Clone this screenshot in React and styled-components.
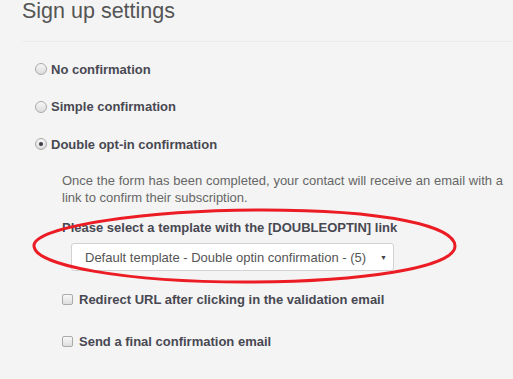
import React from 'react';
import styled, { createGlobalStyle } from 'styled-components';

const GlobalStyle = createGlobalStyle`
  html, body {
    margin: 0;
    padding: 0;
    background: #f4f4f4;
  }
  body {
    font-family: "Liberation Sans", Arial, sans-serif;
    color: #4a4a4a;
  }
`;

const Page = styled.div`
  position: relative;
  padding-left: 22px;
  min-height: 379px;
  box-sizing: border-box;
  overflow: hidden;
`;

const Title = styled.h1`
  margin: 0;
  font-size: 21.5px;
  line-height: 23px;
  font-weight: normal;
  color: #555;
`;

const Divider = styled.div`
  margin-top: 18px;
  height: 1px;
  background: #ececec;
`;

const Options = styled.div`
  padding-left: 13px;
  margin-top: 19px;
  display: flex;
  flex-direction: column;
`;

const OptionRow = styled.label`
  display: flex;
  align-items: center;
  gap: 4px;
  height: 16px;
  margin-top: ${p => p.$first ? '0' : '21.5px'};
  font-size: 13px;
  font-weight: bold;
  color: #484852;
`;

const Radio = styled.span`
  width: 10px;
  height: 10px;
  border-radius: 50%;
  border: 1px solid #aaa;
  background: linear-gradient(#f6f6f6, #dcdcdc);
  display: flex;
  align-items: center;
  justify-content: center;
  flex-shrink: 0;

  &::after {
    content: '';
    display: ${p => p.$checked ? 'block' : 'none'};
    width: 4px;
    height: 4px;
    border-radius: 50%;
    background: #3b3b45;
  }
`;

const Details = styled.div`
  padding-left: 27px;
  padding-right: 10px;
`;

const Description = styled.p`
  margin: 19.5px 0 0;
  font-size: 13px;
  line-height: 17px;
  color: #666;
  text-align: justify;
`;

const FieldLabel = styled.div`
  margin-top: 13px;
  font-size: 13px;
  line-height: 17px;
  font-weight: bold;
  color: #484852;
`;

const Select = styled.div`
  margin: 7.5px 0 0 9px;
  width: 323px;
  height: 28px;
  box-sizing: border-box;
  background: #fff;
  border: 1px solid #d2d2d2;
  border-radius: 3px;
  display: flex;
  align-items: center;
  justify-content: space-between;
  padding: 0 6px 0 13px;
  font-size: 13px;
  color: #555;
`;

const Caret = styled.span`
  font-size: 7px;
  color: #444;
`;

const CheckRow = styled.label`
  display: flex;
  align-items: center;
  gap: 6px;
  height: 16px;
  margin-top: ${p => p.$gap};
  font-size: 13px;
  font-weight: bold;
  color: #484852;
`;

const Checkbox = styled.span`
  width: 9px;
  height: 9px;
  border: 1px solid #aaa;
  border-radius: 2px;
  background: linear-gradient(#f8f8f8, #dedede);
  flex-shrink: 0;
`;

const Annotation = styled.svg`
  position: absolute;
  left: 0;
  top: 0;
  pointer-events: none;
`;

export default function App() {
  return (
    <>
      <GlobalStyle />
      <Page>
        <Title>Sign up settings</Title>
        <Divider />
        <Options>
          <OptionRow $first>
            <Radio />
            No confirmation
          </OptionRow>
          <OptionRow>
            <Radio />
            Simple confirmation
          </OptionRow>
          <OptionRow>
            <Radio $checked />
            Double opt-in confirmation
          </OptionRow>
          <Details>
            <Description>
              Once the form has been completed, your contact will receive an email with a link to confirm their subscription.
            </Description>
            <FieldLabel>Please select a template with the [DOUBLEOPTIN] link</FieldLabel>
            <Select>
              <span>Default template - Double optin confirmation - (5)</span>
              <Caret>▼</Caret>
            </Select>
            <CheckRow $gap="20px">
              <Checkbox />
              Redirect URL after clicking in the validation email
            </CheckRow>
            <CheckRow $gap="26px">
              <Checkbox />
              Send a final confirmation email
            </CheckRow>
          </Details>
        </Options>
        <Annotation width="513" height="379" viewBox="0 0 513 379">
          <path
            d="M 34 245 C 36 226, 150 210, 263 210 C 385 210, 455 226, 455 246 C 455 268, 360 282, 245 282 C 128 282, 32 266, 34 245 Z"
            fill="none"
            stroke="#ec1c24"
            strokeWidth="3"
          />
        </Annotation>
      </Page>
    </>
  );
}
